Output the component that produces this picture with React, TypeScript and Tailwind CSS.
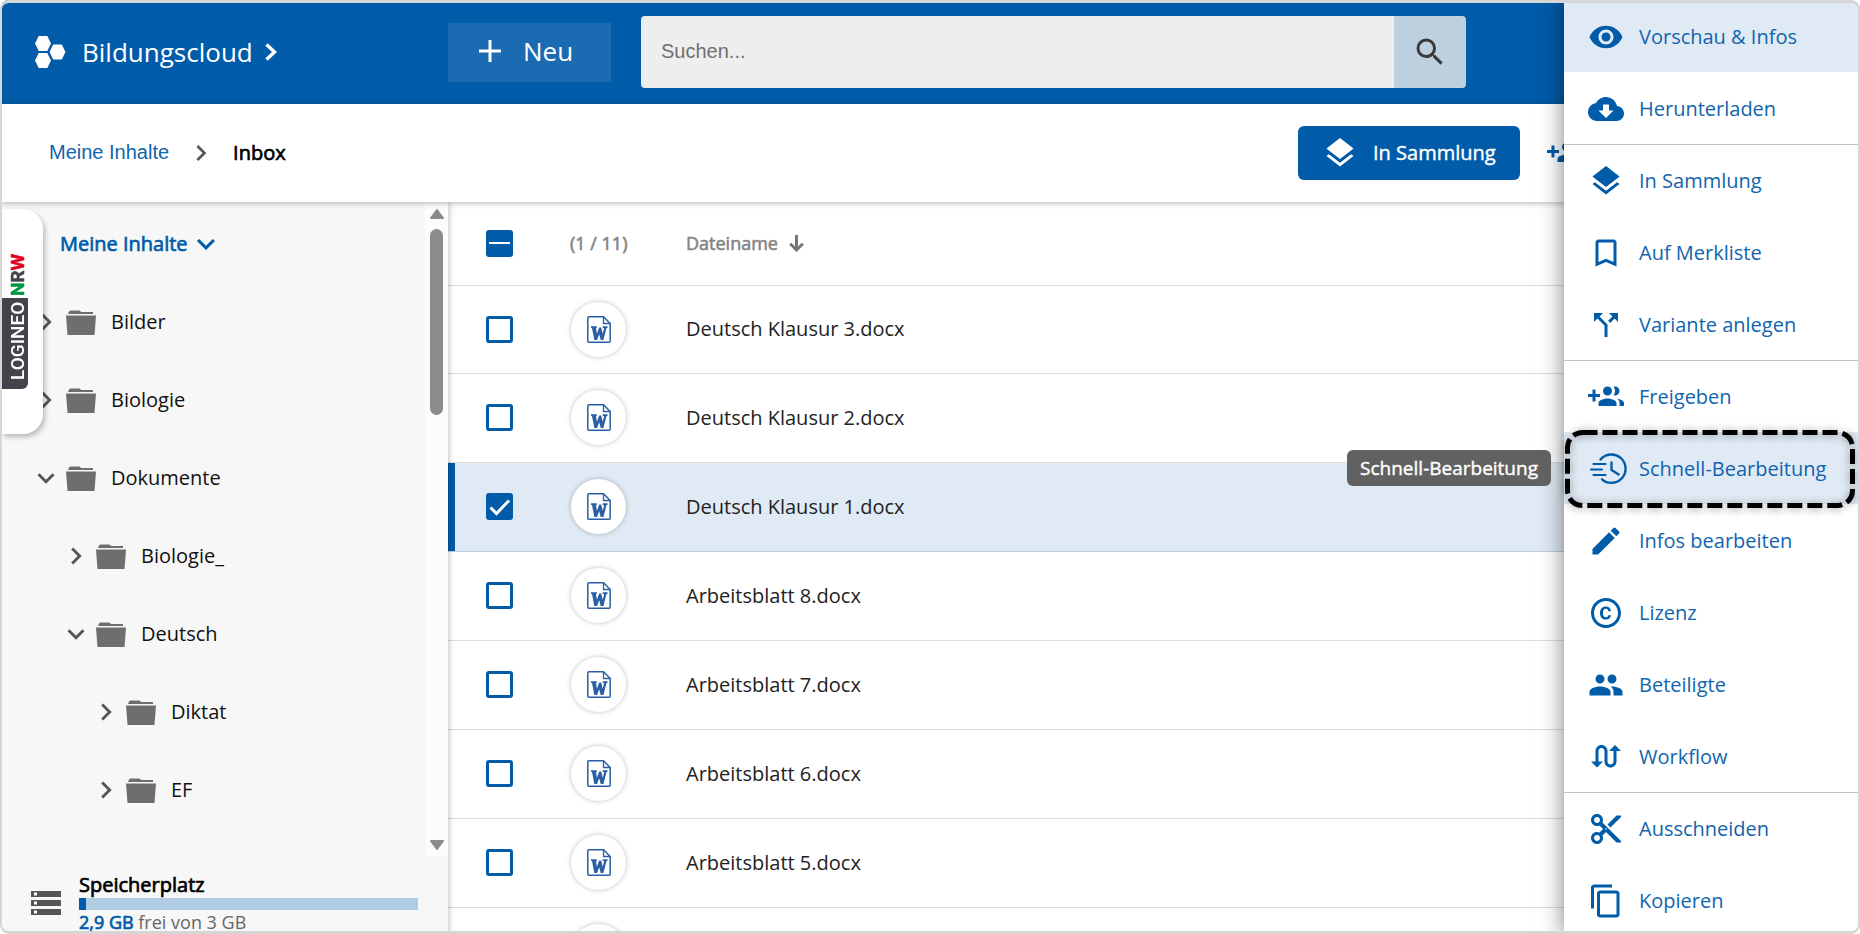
import { useState } from 'react'
import type { ReactNode } from 'react'
import {
  MdBookmarkBorder,
  MdCallSplit,
  MdChevronRight,
  MdCloudDownload,
  MdContentCopy,
  MdContentCut,
  MdCopyright,
  MdEdit,
  MdExpandMore,
  MdGroup,
  MdLayers,
  MdRemoveRedEye,
  MdSearch,
  MdSwapCalls,
} from 'react-icons/md'

const menuItems = [
  { label: 'Vorschau & Infos', icon: <MdRemoveRedEye />, active: true },
  { label: 'Herunterladen', icon: <MdCloudDownload /> },
  { label: 'In Sammlung', icon: <MdLayers />, divider: true },
  { label: 'Auf Merkliste', icon: <MdBookmarkBorder /> },
  { label: 'Variante anlegen', icon: <MdCallSplit /> },
  { label: 'Freigeben', icon: <ShareIcon />, divider: true },
  { label: 'Schnell-Bearbeitung', icon: <QuickEditIcon />, active: true, focused: true },
  { label: 'Infos bearbeiten', icon: <MdEdit /> },
  { label: 'Lizenz', icon: <MdCopyright /> },
  { label: 'Beteiligte', icon: <MdGroup /> },
  { label: 'Workflow', icon: <MdSwapCalls /> },
  { label: 'Ausschneiden', icon: <MdContentCut />, divider: true },
  { label: 'Kopieren', icon: <MdContentCopy /> },
]

const folders = [
  { name: 'Bilder', indent: 'pl-[27px]', open: false },
  { name: 'Biologie', indent: 'pl-[27px]', open: false },
  { name: 'Dokumente', indent: 'pl-[27px]', open: true },
  { name: 'Biologie_', indent: 'pl-[57px]', open: false },
  { name: 'Deutsch', indent: 'pl-[57px]', open: true },
  { name: 'Diktat', indent: 'pl-[87px]', open: false },
  { name: 'EF', indent: 'pl-[87px]', open: false },
]

const files = [
  'Deutsch Klausur 3.docx',
  'Deutsch Klausur 2.docx',
  'Deutsch Klausur 1.docx',
  'Arbeitsblatt 8.docx',
  'Arbeitsblatt 7.docx',
  'Arbeitsblatt 6.docx',
  'Arbeitsblatt 5.docx',
  'Arbeitsblatt 4.docx',
]

function ShareIcon() {
  return (
    <svg viewBox="0 0 24 24" width="1em" height="1em" fill="currentColor">
      <path d="M8 10H5V7H3v3H0v2h3v3h2v-3h3v-2zm10 1c1.660 0 2.990-1.340 2.990-3S19.660 5 18 5c-.32 0-.63.05-.91.14.57.81.9 1.790.9 2.860s-.34 2.040-.9 2.860c.28.09.59.14.91.14zm-5 0c1.660 0 2.990-1.340 2.990-3S14.660 5 13 5c-1.660 0-3 1.340-3 3s1.340 3 3 3zm6.620 2.160c.83.73 1.380 1.660 1.380 2.840v2h3v-2c0-1.540-2.370-2.490-4.380-2.840zM13 13c-2 0-6 1-6 3v2h12v-2c0-2-4-3-6-3z" />
    </svg>
  )
}

function QuickEditIcon() {
  return (
    <svg viewBox="0 0 36 36" width="1em" height="1em" className="overflow-visible" fill="none" stroke="currentColor" strokeLinecap="round" strokeLinejoin="round">
      <path d="M12.500 8.500A14.200 14.200 0 1 1 14 28.300" strokeWidth="2.400" />
      <path d="M23.500 10.500v8.500l8 5" strokeWidth="2.400" strokeLinecap="butt" />
      <path d="M5.500 13h12M3 18.500h11M5.500 24h12" strokeWidth="2.200" />
    </svg>
  )
}

function HexLogo() {
  return (
    <svg viewBox="0 0 31 32" className="h-8 w-[31px]" fill="currentColor">
      <path d="M3.700 0h8.600L16 7.500l-3.700 7.500H3.700L0 7.500z" />
      <path d="M18.200 8.500h8.600l3.700 7.500-3.700 7.500h-8.600L14.500 16z" />
      <path d="M3.700 17h8.600l3.700 7.500-3.700 7.500H3.700L0 24.500z" />
    </svg>
  )
}

function FolderIcon() {
  return (
    <svg viewBox="0 0 30 25" className="h-[25px] w-[30px] shrink-0 text-[#6e6e6e]" fill="currentColor">
      <path d="M2 4l1-2.500Q3.500.500 5 .500h8q1.500 0 2 1.500h12v2z" />
      <path d="M0 5.500h30L28.500 25h-27z" />
    </svg>
  )
}

function StorageIcon() {
  return (
    <svg viewBox="0 0 30 24" className="mt-[19px] h-6 w-[30px] shrink-0">
      <path d="M0 0h30v6H0zM0 9h30v6H0zM0 18h30v6H0z" fill="#555" />
      <path d="M3 1.500h3v3H3zM3 10.500h3v3H3zM3 19.500h3v3H3z" fill="white" />
    </svg>
  )
}

function WordIcon() {
  return (
    <svg viewBox="0 0 24 27" className="h-[27px] w-6" fill="none" stroke="#2b5fa5">
      <path d="M1.800.8h14.700L23.200 7.500v17.500q0 1.200-1 1.200H1.800q-1 0-1-1.200V2q0-1.200 1-1.200z" strokeWidth="1.500" />
      <path d="M16.500.8v6.700h6.700" strokeWidth="1.300" />
      <path d="M4 10.300h5.800v1.800H9l.9 5.700 2.300-6.300h2l1.500 6.300 1.500-5.700h-1.500v-1.800H20.500v1.800h-1L16.400 24h-2.700l-1.500-5.800L10 24H7.300L5 12.100H4z" fill="#2b5fa5" stroke="none" />
    </svg>
  )
}

type CheckProps = { label: string; checked: boolean; partial?: boolean; onChange: () => void }

function Check({ label, checked, partial, onChange }: CheckProps) {
  return (
    <span className="relative block size-[27px]">
      <input
        type="checkbox"
        aria-label={label}
        checked={checked}
        onChange={onChange}
        className="block size-[27px] appearance-none rounded-[3px] border-3 border-[#005ba9] bg-white checked:bg-[#005ba9]"
      />
      {checked && (
        <svg viewBox="0 0 27 27" className="pointer-events-none absolute inset-0 size-[27px]" fill="none" stroke="white" strokeWidth={partial ? 2 : 3}>
          <path d={partial ? 'M3 13h21' : 'M4.500 14.500l6 6L23 7.500'} />
        </svg>
      )}
    </span>
  )
}

function Header() {
  return (
    <header className="flex h-[104px] shrink-0 items-center bg-[#005ba9] text-white">
      <div className="flex w-[446px] shrink-0 items-center pl-[33px]">
        <HexLogo />
        <a href="#" className="ml-4 text-[26px] leading-8">Bildungscloud</a>
        <svg viewBox="0 0 12 18" className="ml-3 h-[18px] w-3" fill="none" stroke="currentColor" strokeWidth="3.500">
          <path d="M1.500 1.500L9.500 9l-8 7.500" />
        </svg>
      </div>
      <button className="flex h-[59px] w-[163px] shrink-0 items-center bg-[#1a6bb1] pb-0.5 pl-[31px] text-[26px]">
        <svg viewBox="0 0 22 22" className="size-[22px]" fill="none" stroke="currentColor" strokeWidth="3">
          <path d="M11 0v22M0 11h22" />
        </svg>
        <span className="ml-[22px]">Neu</span>
      </button>
      <form className="mr-[392px] ml-[30px] flex h-[72px] flex-1 overflow-hidden rounded" onSubmit={(e) => e.preventDefault()}>
        <input
          type="search"
          aria-label="Suchen"
          placeholder="Suchen..."
          className="min-w-0 flex-1 bg-[#eeeeee] px-5 pb-0.5 font-['Liberation_Sans',sans-serif] text-xl text-[#333] outline-none placeholder:text-[#707070]"
        />
        <button aria-label="Suche starten" className="flex w-[72px] items-center justify-center bg-[#bdd0e0] text-[#3a3a3a]">
          <MdSearch className="size-9" />
        </button>
      </form>
    </header>
  )
}

function Breadcrumb() {
  return (
    <div className="relative z-10 flex h-[98px] shrink-0 items-center justify-between bg-white pr-[275px] pl-[47px] shadow-[0_1px_6px_rgba(0,0,0,0.3)]">
      <nav className="flex items-center">
        <a href="#" className="pb-0.5 font-['Liberation_Sans',sans-serif] text-xl text-[#1164ae]">Meine Inhalte</a>
        <MdChevronRight className="mx-4 size-8 text-[#555]" />
        <span className="text-xl text-black [-webkit-text-stroke:0.7px]">Inbox</span>
      </nav>
      <div className="flex items-center">
        <button className="flex h-[54px] w-[222px] items-center rounded-md bg-[#005ba9] pl-6 text-xl text-white [-webkit-text-stroke:0.4px]">
          <MdLayers className="size-9" />
          <span className="ml-[15px]">In Sammlung</span>
        </button>
        <button aria-label="Freigeben" className="ml-[27px] text-4xl text-[#005ba9]">
          <ShareIcon />
        </button>
      </div>
    </div>
  )
}

function Sidebar() {
  return (
    <aside className="relative z-[5] flex w-[446px] shrink-0 flex-col bg-[#f7f7f7] shadow-[1px_0_6px_rgba(0,0,0,0.25)]">
      <div className="flex min-h-0 flex-1">
        <div className="flex-1 overflow-hidden">
          <button className="flex h-[81px] items-center pt-0.5 pl-[58px] text-xl text-[#005ba9] [-webkit-text-stroke:0.7px]">
            Meine Inhalte
            <MdExpandMore className="size-9" />
          </button>
          <ul>
            {folders.map((folder) => (
              <li key={folder.name}>
                <button className={`flex h-[78px] w-full items-center text-xl text-[#111] ${folder.indent}`}>
                  {folder.open ? (
                    <MdExpandMore className="size-[34px] text-[#555]" />
                  ) : (
                    <MdChevronRight className="size-[34px] text-[#555]" />
                  )}
                  <span className="ml-[3px]">
                    <FolderIcon />
                  </span>
                  <span className="ml-[15px]">{folder.name}</span>
                </button>
              </li>
            ))}
          </ul>
        </div>
        <div className="flex w-[23px] flex-col items-center bg-[#fcfcfc] pt-[7px] pb-1.5 text-[#8b8b8b]">
          <svg viewBox="0 0 14 10" className="h-2.5 w-3.5" fill="currentColor" stroke="currentColor" strokeLinejoin="round" strokeWidth="2">
            <path d="M7 1l6 8H1z" />
          </svg>
          <div className="mt-2.5 h-[186px] w-[13px] rounded-full bg-[#8b8b8b]" />
          <svg viewBox="0 0 14 10" className="mt-auto h-2.5 w-3.5" fill="currentColor" stroke="currentColor" strokeLinejoin="round" strokeWidth="2">
            <path d="M7 9l6-8H1z" />
          </svg>
        </div>
      </div>

      {/* Storage quota */}
      <div className="flex h-[78px] items-start pt-4 pr-[30px] pl-[29px]">
        <StorageIcon />
        <div className="ml-[18px] flex-1">
          <div className="text-xl leading-[26px] text-black [-webkit-text-stroke:0.7px]">Speicherplatz</div>
          <div className="h-3 bg-[#b2cce4]">
            <div className="h-3 w-[7px] bg-[#005ba9]" />
          </div>
          <div className="text-lg leading-6 text-[#666]">
            <span className="text-[#005ba9] [-webkit-text-stroke:0.7px]">2,9 GB</span> frei von 3 GB
          </div>
        </div>
      </div>

      {/* LOGINEO side tab */}
      <a href="#" className="absolute top-[7px] left-0 h-[225px] w-[41px] rounded-r-[20px] bg-white pt-[44px] shadow-[2px_3px_5px_rgba(0,0,0,0.25)]">
        <span className="flex h-[136px] w-[26px] rotate-180 font-[Roboto,sans-serif] text-[19px] leading-5 font-bold text-[#43444b] [writing-mode:vertical-rl]">
          <span className="h-[91px] w-[26px] rounded-tl-md bg-[#43444b] pt-[9px] pr-1.5 font-medium text-white">LOGINEO</span>
          <span className="pt-0.5 pr-1.5 [-webkit-text-stroke:0.5px]">
            <span className="text-[#009640]">N</span>R<span className="text-[#e2001a]">W</span>
          </span>
        </span>
      </a>
    </aside>
  )
}

function FileTable() {
  const [selected, setSelected] = useState(['Deutsch Klausur 1.docx'])
  const toggle = (name: string) =>
    setSelected((prev) => (prev.includes(name) ? prev.filter((n) => n !== name) : [...prev, name]))

  return (
    <main className="min-w-0 flex-1 overflow-hidden bg-white">
      <table className="w-full table-fixed border-collapse text-left text-xl text-[#222]">
        <thead>
          <tr className="h-[83px] border-b border-[#dcdcdc] text-lg text-[#858585]">
            <th className="w-[110px] pl-[38px]">
              <Check label="Alle auswählen" checked={selected.length > 0} partial onChange={() => setSelected([])} />
            </th>
            <th className="w-[128px] pl-3 font-normal [-webkit-text-stroke:0.6px]">({selected.length} / 11)</th>
            <th className="font-normal [-webkit-text-stroke:0.6px]">
              <span className="flex items-center">
                Dateiname
                <svg viewBox="0 0 15 17" className="ml-[11px] h-[17px] w-[15px]" fill="none" stroke="#777" strokeWidth="3">
                  <path d="M7.500 0v15M1.200 8.800l6.300 6.200 6.300-6.200" />
                </svg>
              </span>
            </th>
          </tr>
        </thead>
        <tbody>
          {files.map((name) => {
            const on = selected.includes(name)
            return (
              <tr
                key={name}
                className={`h-[89px] border-b first:h-[88px] ${on ? 'border-[#c0cdda] bg-[#e0eaf4]' : 'border-[#dcdcdc]'}`}
              >
                <td className={on ? 'pl-[38px] shadow-[inset_7px_0_0_#005ba9]' : 'pl-[38px]'}>
                  <Check label={name} checked={on} onChange={() => toggle(name)} />
                </td>
                <td className="pl-[13px]">
                  <span className="flex size-[55px] items-center justify-center rounded-full bg-white shadow-[0_0_5px_rgba(0,0,0,0.25)]">
                    <WordIcon />
                  </span>
                </td>
                <td>{name}</td>
              </tr>
            )
          })}
        </tbody>
      </table>
    </main>
  )
}

type MenuItemProps = { label: string; icon: ReactNode; active?: boolean; divider?: boolean; focused?: boolean }

function MenuItem({ label, icon, active, divider, focused }: MenuItemProps) {
  return (
    <li className={`relative h-[72px] border-t ${divider ? 'border-[#c4c4c4]' : 'border-transparent'} ${active ? 'bg-[#e0eaf4]' : ''}`}>
      <button role="menuitem" className="flex size-full items-center pl-6 text-xl text-[#1164ae]">
        <span className="text-4xl text-[#005ba9]">{icon}</span>
        <span className="ml-[15px] whitespace-nowrap">{label}</span>
      </button>
      {focused && (
        <>
          <svg className="pointer-events-none absolute -top-[3px] left-px h-[78px] w-[290px] overflow-visible drop-shadow-[0_1px_4px_rgba(0,0,0,0.4)]" fill="none" stroke="black" strokeWidth="5">
            <rect x="2.500" y="2.500" width="285" height="73" rx="15" strokeDasharray="15 5" />
          </svg>
          <span role="tooltip" className="absolute top-[17px] right-full mr-[13px] rounded-md bg-[#616161] px-[13px] text-[19px] leading-9 whitespace-nowrap text-white [-webkit-text-stroke:0.4px]">
            {label}
          </span>
        </>
      )}
    </li>
  )
}

export default function App() {
  return (
    <div className="relative h-screen overflow-hidden bg-white font-['Open_Sans',sans-serif]">
      <div className="flex h-full flex-col px-0.5">
        <Header />
        <Breadcrumb />
        <div className="flex min-h-0 flex-1">
          <Sidebar />
          <FileTable />
        </div>
      </div>

      <ul role="menu" className="absolute top-0 right-0.5 z-20 w-[294px] bg-white shadow-[0_0_22px_rgba(0,0,0,0.5)]">
        {menuItems.map((item) => (
          <MenuItem key={item.label} {...item} />
        ))}
      </ul>

      {/* Window frame */}
      <div className="pointer-events-none absolute inset-0 z-30 rounded-[9px] border-2 border-t-3 border-b-3 border-[#d6d6d6] shadow-[0_0_0_8px_white]" />
    </div>
  )
}
